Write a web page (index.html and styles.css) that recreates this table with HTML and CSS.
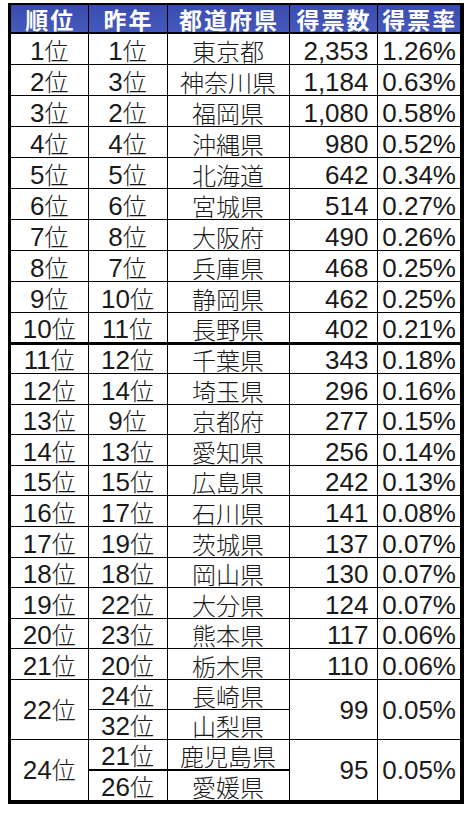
FILE: index.html
```html
<!DOCTYPE html>
<html lang="ja">
<head>
<meta charset="utf-8">
<title>得票ランキング</title>
<link rel="stylesheet" href="styles.css">
</head>
<body>
<div class="frame">
<table class="rank">
<colgroup><col class="c1"><col class="c2"><col class="c3"><col class="c4"><col class="c5"></colgroup>
<thead>
<tr><th>順位</th><th>昨年</th><th>都道府県</th><th>得票数</th><th>得票率</th></tr>
</thead>
<tbody>
<tr class="top"><td class="rk">1<span class="k">位</span></td><td class="rk">1<span class="k">位</span></td><td class="pref">東京都</td><td class="num">2,353</td><td class="pct">1.26%</td></tr>
<tr class="top"><td class="rk">2<span class="k">位</span></td><td class="rk">3<span class="k">位</span></td><td class="pref">神奈川県</td><td class="num">1,184</td><td class="pct">0.63%</td></tr>
<tr class="top"><td class="rk">3<span class="k">位</span></td><td class="rk">2<span class="k">位</span></td><td class="pref">福岡県</td><td class="num">1,080</td><td class="pct">0.58%</td></tr>
<tr class="top"><td class="rk">4<span class="k">位</span></td><td class="rk">4<span class="k">位</span></td><td class="pref">沖縄県</td><td class="num">980</td><td class="pct">0.52%</td></tr>
<tr class="top"><td class="rk">5<span class="k">位</span></td><td class="rk">5<span class="k">位</span></td><td class="pref">北海道</td><td class="num">642</td><td class="pct">0.34%</td></tr>
<tr class="top"><td class="rk">6<span class="k">位</span></td><td class="rk">6<span class="k">位</span></td><td class="pref">宮城県</td><td class="num">514</td><td class="pct">0.27%</td></tr>
<tr class="top"><td class="rk">7<span class="k">位</span></td><td class="rk">8<span class="k">位</span></td><td class="pref">大阪府</td><td class="num">490</td><td class="pct">0.26%</td></tr>
<tr class="top"><td class="rk">8<span class="k">位</span></td><td class="rk">7<span class="k">位</span></td><td class="pref">兵庫県</td><td class="num">468</td><td class="pct">0.25%</td></tr>
<tr class="top"><td class="rk">9<span class="k">位</span></td><td class="rk">10<span class="k">位</span></td><td class="pref">静岡県</td><td class="num">462</td><td class="pct">0.25%</td></tr>
<tr class="top"><td class="rk">10<span class="k">位</span></td><td class="rk">11<span class="k">位</span></td><td class="pref">長野県</td><td class="num">402</td><td class="pct">0.21%</td></tr>
<tr class="sep"><td class="rk">11<span class="k">位</span></td><td class="rk">12<span class="k">位</span></td><td class="pref">千葉県</td><td class="num">343</td><td class="pct">0.18%</td></tr>
<tr><td class="rk">12<span class="k">位</span></td><td class="rk">14<span class="k">位</span></td><td class="pref">埼玉県</td><td class="num">296</td><td class="pct">0.16%</td></tr>
<tr><td class="rk">13<span class="k">位</span></td><td class="rk">9<span class="k">位</span></td><td class="pref">京都府</td><td class="num">277</td><td class="pct">0.15%</td></tr>
<tr><td class="rk">14<span class="k">位</span></td><td class="rk">13<span class="k">位</span></td><td class="pref">愛知県</td><td class="num">256</td><td class="pct">0.14%</td></tr>
<tr><td class="rk">15<span class="k">位</span></td><td class="rk">15<span class="k">位</span></td><td class="pref">広島県</td><td class="num">242</td><td class="pct">0.13%</td></tr>
<tr><td class="rk">16<span class="k">位</span></td><td class="rk">17<span class="k">位</span></td><td class="pref">石川県</td><td class="num">141</td><td class="pct">0.08%</td></tr>
<tr><td class="rk">17<span class="k">位</span></td><td class="rk">19<span class="k">位</span></td><td class="pref">茨城県</td><td class="num">137</td><td class="pct">0.07%</td></tr>
<tr><td class="rk">18<span class="k">位</span></td><td class="rk">18<span class="k">位</span></td><td class="pref">岡山県</td><td class="num">130</td><td class="pct">0.07%</td></tr>
<tr><td class="rk">19<span class="k">位</span></td><td class="rk">22<span class="k">位</span></td><td class="pref">大分県</td><td class="num">124</td><td class="pct">0.07%</td></tr>
<tr><td class="rk">20<span class="k">位</span></td><td class="rk">23<span class="k">位</span></td><td class="pref">熊本県</td><td class="num">117</td><td class="pct">0.06%</td></tr>
<tr><td class="rk">21<span class="k">位</span></td><td class="rk">20<span class="k">位</span></td><td class="pref">栃木県</td><td class="num">110</td><td class="pct">0.06%</td></tr>
<tr class="sub"><td class="rk mid" rowspan="2">22<span class="k">位</span></td><td class="rk">24<span class="k">位</span></td><td class="pref">長崎県</td><td class="num mid" rowspan="2">99</td><td class="pct mid" rowspan="2">0.05%</td></tr>
<tr class="sub"><td class="rk">32<span class="k">位</span></td><td class="pref">山梨県</td></tr>
<tr class="sub"><td class="rk mid" rowspan="2">24<span class="k">位</span></td><td class="rk">21<span class="k">位</span></td><td class="pref">鹿児島県</td><td class="num mid" rowspan="2">95</td><td class="pct mid" rowspan="2">0.05%</td></tr>
<tr class="sub thick"><td class="rk">26<span class="k">位</span></td><td class="pref">愛媛県</td></tr>
</tbody>
</table>
</div>
</body>
</html>
```

FILE: styles.css
```css
html, body {
  background: #ffffff;
}
body {
  margin: 3px 0 0 8px;
}
.frame {
  display: inline-block;
  border-style: solid;
  border-color: #000;
  border-width: 2px 4px 4px 3px;
}
.rank {
  border-collapse: collapse;
  border-style: hidden;
  table-layout: fixed;
  width: 449px;
  font-family: "Liberation Sans", "Noto Sans CJK JP", sans-serif;
  color: #1a1a1a;
}
.c1 { width: 77px; }
.c2 { width: 79px; }
.c3 { width: 122px; }
.c4 { width: 88px; }
.c5 { width: 83px; }

.rank th,
.rank td {
  border: 1px solid #000;
  padding: 0;
}
.rank thead tr {
  height: 28px;
}
.rank th {
  background: linear-gradient(#394cae, #4659bd);
  color: #fff;
  font-family: "Noto Sans CJK JP", sans-serif;
  font-weight: 700;
  font-size: 23px;
  line-height: 22px;
  letter-spacing: 2px;
  text-indent: 2px;
  text-align: center;
  vertical-align: bottom;
  padding-bottom: 2px;
  border-bottom: 2px solid #000;
}
.rank td {
  font-size: 26px;
  line-height: 22px;
  vertical-align: bottom;
  padding-bottom: 2px;
}
.rank tbody tr {
  height: 30.6px;
}
.rank tbody tr.top {
  height: 31px;
}
.rank tbody tr.sub {
  height: 30px;
}
.rank tr.sep td {
  border-top: 3px solid #000;
}
.rank tr.thick td {
  border-top: 2px solid #000;
}
.k,
.rank td.pref {
  font-family: "Noto Sans CJK JP", sans-serif;
  font-size: 24px;
  font-weight: 300;
  line-height: 22px;
}
.rk,
.pref {
  text-align: center;
}
.rank td.num {
  text-align: right;
  padding-right: 8px;
}
.rank td.pct {
  text-align: right;
  padding-right: 4px;
}
.rank td.mid {
  vertical-align: middle;
  padding-bottom: 0;
}
```
